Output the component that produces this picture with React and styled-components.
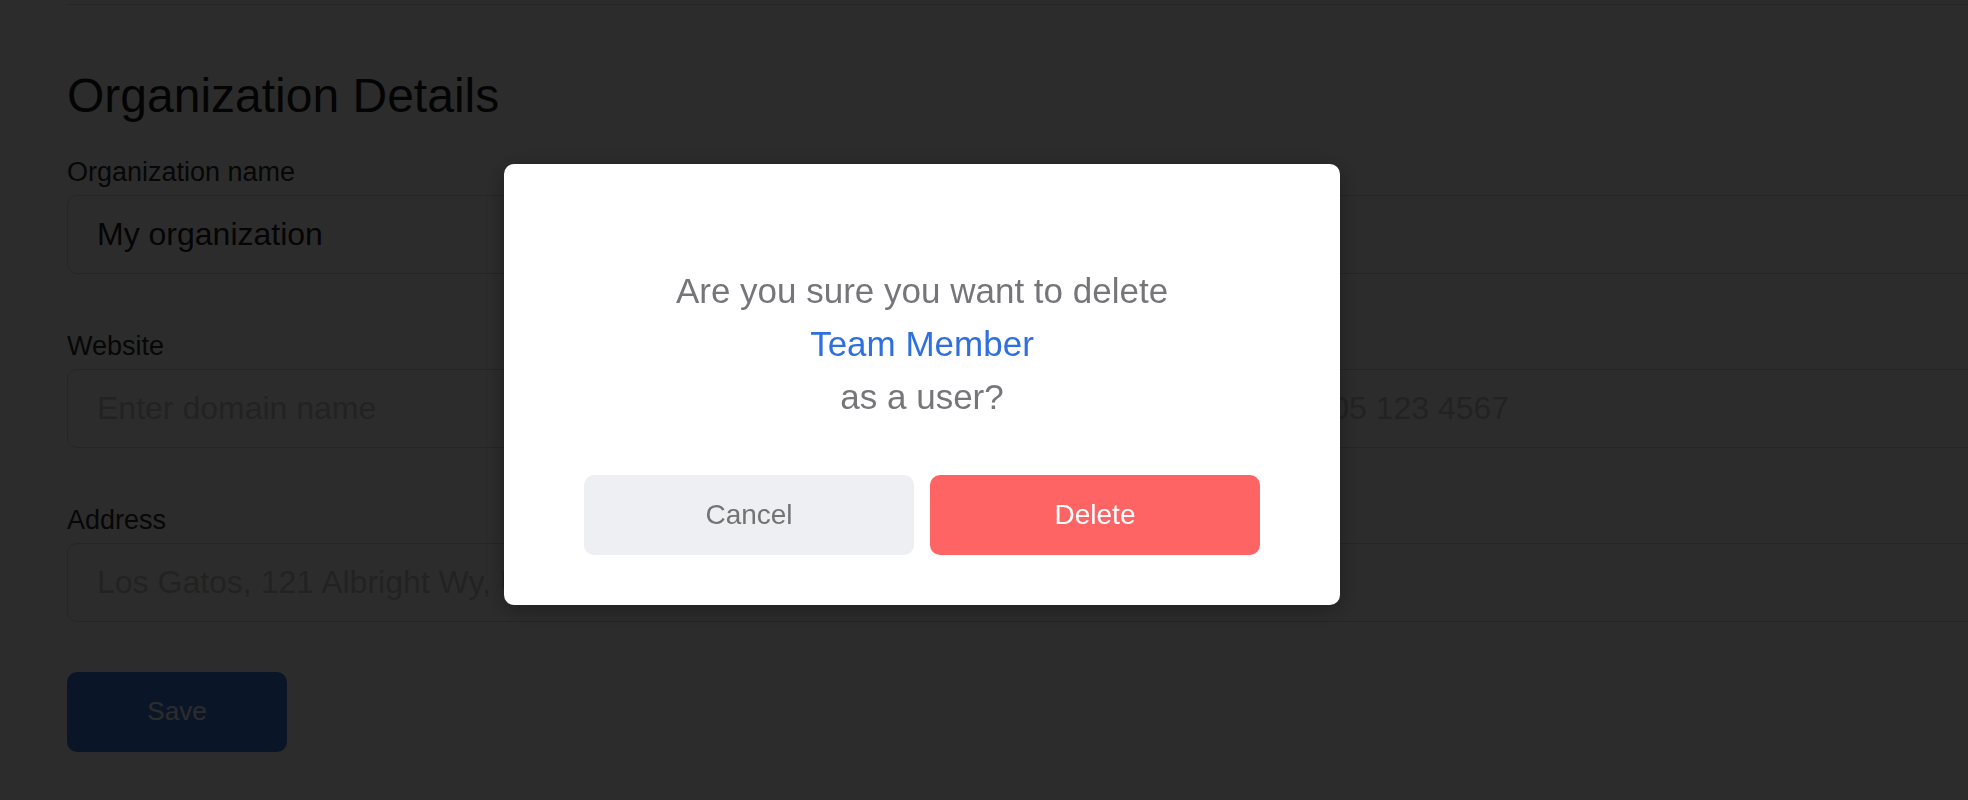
import React from 'react';
import styled, { createGlobalStyle } from 'styled-components';

const GlobalStyle = createGlobalStyle`
body {
  margin: 0;
  background: #ffffff;
  font-family: "Liberation Sans", Arial, sans-serif;
  overflow: hidden;
}
* {
  box-sizing: border-box;
}
`

const Page = styled.div`
padding-left: 67px;
min-height: 800px;
`

const TopRule = styled.div`
width: 2318px;
margin-top: 4px;
border-top: 1px solid #dcdcdc;
`

const Heading = styled.h1`
margin: 62px 0 0;
font-size: 48px;
line-height: 57.6px;
font-weight: 400;
color: #1a1a1a;
`

const Form = styled.form`
width: 2318px;
margin-top: 31px;
display: grid;
grid-template-columns: 1fr 1fr;
column-gap: 24px;
row-gap: 56px;
`

const Field = styled.div`
display: flex;
flex-direction: column;
gap: 7px;
grid-column: ${props => props.$wide ? '1 / -1' : 'auto'};
`

const Label = styled.label`
font-size: 27px;
line-height: 32px;
color: #2a2a2a;
`

const Input = styled.input`
height: 79px;
width: 100%;
padding: 0 29px;
border: 1px solid #d4d4d4;
border-radius: 10px;
background: #ffffff;
font-family: inherit;
font-size: 32px;
color: #222222;
outline: none;
&::placeholder {
  color: #c6c6c6;
}
`

const SaveButton = styled.button`
margin-top: 50px;
width: 220px;
height: 80px;
border: 0;
border-radius: 10px;
background: #3a80e8;
color: #ffffff;
font-family: inherit;
font-size: 26px;
`

const Overlay = styled.div`
position: fixed;
inset: 0;
background: rgba(0, 0, 0, 0.827);
display: flex;
align-items: center;
justify-content: center;
padding: 0 124px 32px 0;
`

const Modal = styled.div`
width: 836px;
padding: 100px 80px 50px;
background: #ffffff;
border-radius: 10px;
box-shadow: 0 4px 24px rgba(0, 0, 0, 0.35);
`

const Message = styled.p`
margin: 0;
text-align: center;
font-size: 35px;
line-height: 53px;
color: #76767a;
`

const Name = styled.span`
display: block;
color: #2f6fe0;
`

const Actions = styled.div`
margin-top: 52px;
display: grid;
grid-template-columns: 1fr 1fr;
gap: 16px;
`

const ActionButton = styled.button`
height: 80px;
border: 0;
border-radius: 10px;
font-family: inherit;
font-size: 28px;
background: ${props => props.$danger ? '#ff6464' : '#eeeff2'};
color: ${props => props.$danger ? '#ffffff' : '#737373'};
cursor: pointer;
`

function App() {
    return (
        <>
            <GlobalStyle />
            <Page>
                <TopRule />
                <Heading>Organization Details</Heading>
                <Form onSubmit={(e) => e.preventDefault()}>
                    <Field $wide>
                        <Label>Organization name</Label>
                        <Input defaultValue="My organization" />
                    </Field>
                    <Field>
                        <Label>Website</Label>
                        <Input placeholder="Enter domain name" />
                    </Field>
                    <Field>
                        <Label>Phone</Label>
                        <Input placeholder="+1 405 123 4567" />
                    </Field>
                    <Field $wide>
                        <Label>Address</Label>
                        <Input placeholder="Los Gatos, 121 Albright Wy, USA" />
                    </Field>
                </Form>
                <SaveButton type="button">Save</SaveButton>
            </Page>

            <Overlay>
                <Modal>
                    <Message>
                        Are you sure you want to delete
                        <Name>Team Member</Name>
                        as a user?
                    </Message>
                    <Actions>
                        <ActionButton type="button">Cancel</ActionButton>
                        <ActionButton type="button" $danger>Delete</ActionButton>
                    </Actions>
                </Modal>
            </Overlay>
        </>
    )
}

export default App;
